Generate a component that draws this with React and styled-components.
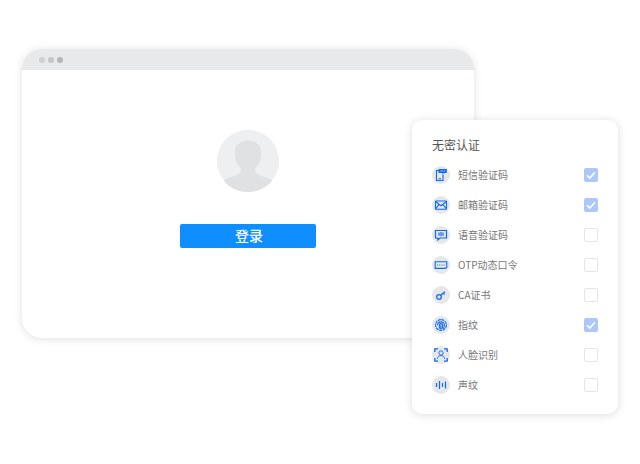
import React from 'react';
import styled, { createGlobalStyle } from 'styled-components';

const GlobalStyle = createGlobalStyle`
  html, body {
    margin: 0;
    background: #fff;
    font-family: "Noto Sans CJK SC", "Noto Sans", sans-serif;
  }
`;

const Stage = styled.div`
  position: relative;
  width: 640px;
  height: 464px;
  padding: 49px 0 0 22px;
  box-sizing: border-box;
  overflow: hidden;
`;

const BrowserWindow = styled.div`
  width: 452px;
  height: 289px;
  border-radius: 20px;
  background: #fff;
  box-shadow: 0 1px 8px rgba(0, 0, 0, 0.13);
  overflow: hidden;
  display: flex;
  flex-direction: column;
`;

const TitleBar = styled.div`
  height: 21px;
  flex: none;
  background: #e8e9ea;
  display: flex;
  align-items: center;
  gap: 3px;
  padding: 0 0 0 17px;
`;

const Dot = styled.span`
  width: 6px;
  height: 6px;
  border-radius: 50%;
  background: ${p => p.$color};
`;

const LoginArea = styled.div`
  display: flex;
  flex-direction: column;
  align-items: center;
  padding-top: 60px;
`;

const Avatar = styled.svg`
  display: block;
  width: 62px;
  height: 62px;
`;

const LoginButton = styled.div`
  margin-top: 32px;
  width: 136px;
  height: 24px;
  box-sizing: border-box;
  padding-left: 2px;
  border-radius: 2px;
  background: #0f8fff;
  color: #fff;
  font-size: 14px;
  font-weight: 500;
  line-height: 22px;
  text-align: center;
`;

const Panel = styled.div`
  position: absolute;
  left: 412px;
  top: 120px;
  width: 206px;
  height: 294px;
  box-sizing: border-box;
  padding: 16px 20px 0;
  border-radius: 10px;
  background: #fff;
  box-shadow: 0 1px 8px rgba(0, 0, 0, 0.14);
`;

const PanelTitle = styled.div`
  font-size: 12px;
  line-height: 18px;
  color: #555;
  margin-bottom: 6px;
`;

const Row = styled.div`
  height: 30px;
  display: flex;
  align-items: center;
`;

const IconCircle = styled.span`
  width: 18px;
  height: 18px;
  flex: none;
  border-radius: 50%;
  background: #e6e7e8;
  display: flex;
  align-items: center;
  justify-content: center;
`;

const Label = styled.span`
  margin-left: 8px;
  padding-bottom: 2px;
  flex: 1;
  font-size: 10px;
  color: #777;
  white-space: nowrap;
`;

const Check = styled.span`
  width: 14px;
  height: 14px;
  box-sizing: border-box;
  border-radius: 2px;
  display: flex;
  align-items: center;
  justify-content: center;
  background: ${p => (p.$on ? '#adc8f8' : '#fff')};
  border: ${p => (p.$on ? 'none' : '1px solid #e4e5e6')};
`;

const Glyph = ({ children }) => (
  <svg width="14" height="14" viewBox="0 0 14 14" fill="none" stroke="#1268ee" strokeWidth="1.1">
    {children}
  </svg>
);

const methods = [
  {
    name: '短信验证码',
    icon: (
      <>
        <path d="M5 2.5H2.5V12.5H9V6.5" />
        <path d="M4.5 1H12.8V5H10L8.5 6.5V5H4.5Z" fill="#1268ee" stroke="none" />
        <path d="M6.5 3H7.5M8.2 3H9.2M9.9 3H10.9" stroke="#fff" strokeWidth="0.8" />
        <path d="M4.5 10.8H7" />
      </>
    ),
    checked: true,
  },
  {
    name: '邮箱验证码',
    icon: (
      <>
        <rect x="1.5" y="3" width="11" height="8.2" rx="0.5" />
        <path d="M1.5 3.5L7 7.8L12.5 3.5M1.5 10.8L5 6.6M12.5 10.8L9 6.6" />
      </>
    ),
    checked: true,
  },
  {
    name: '语音验证码',
    icon: (
      <>
        <path d="M1.5 2.5H12.5V10H6L3.8 12V10H1.5Z" strokeWidth="1.2" />
        <path d="M5 4.5V7.8M7 4V8.2M9 4.5V7.8" strokeWidth="1.2" />
      </>
    ),
  },
  {
    name: 'OTP动态口令',
    icon: (
      <>
        <path d="M1.2 3.7H12.8V9.2L11.5 10.4H1.2Z" />
        <path d="M3 7H4M5.2 7H6.2M7.4 7H8.4M9.6 7H10.6" />
      </>
    ),
  },
  {
    name: 'CA证书',
    icon: (
      <>
        <circle cx="5" cy="9" r="2.3" strokeWidth="1.3" />
        <path d="M6.7 7.3L11 3.8M9.2 5.2L10.6 6.7" strokeWidth="1.2" />
      </>
    ),
  },
  {
    name: '指纹',
    icon: (
      <>
        <circle cx="7" cy="7" r="5.4" strokeDasharray="3 0.6" />
        <path d="M3.6 7.2C3.6 2.7 10.4 2.7 10.4 7.2C10.4 8.6 9.8 9.9 9 11" />
        <path d="M5.2 10.6C5.8 9 5.1 7.9 5.5 6.6C6 5.1 8.4 5.3 8.7 7C8.8 8.3 8.4 9.7 7.6 11.2" />
        <path d="M7 6.6C7.2 8.2 6.8 9.8 6.2 11.4" />
      </>
    ),
    checked: true,
  },
  {
    name: '人脸识别',
    icon: (
      <>
        <path d="M0.8 4V0.8H4M10 0.8H13.2V4M0.8 10V13.2H4M10 13.2H13.2V10" strokeWidth="1.3" />
        <circle cx="7" cy="5" r="2.2" strokeWidth="0.9" />
        <path d="M3.4 10.8C3.6 8.6 5 7.6 7 7.6C9 7.6 10.4 8.6 10.6 10.8" strokeWidth="0.9" />
      </>
    ),
  },
  {
    name: '声纹',
    icon: <path d="M2.5 5V9M5.5 3V11M8.5 5V9M11.5 3.5V10.5" strokeWidth="1.2" />,
  },
];

const App = () => (
  <Stage>
    <GlobalStyle />
    <BrowserWindow>
      <TitleBar>
        <Dot $color="#cfd0d2" />
        <Dot $color="#c6c7c9" />
        <Dot $color="#b4b5b7" />
      </TitleBar>
      <LoginArea>
        <Avatar viewBox="0 0 62 62">
          <circle cx="31" cy="31" r="31" fill="#eeeff1" />
          <path
            fill="#e0e1e3"
            d="M31 10.5C22.5 10.5 17.8 15.5 17.8 22.5C17.8 29 19.5 33.5 22.5 36.5C24.2 38.5 24.2 41.5 22.5 43.5C20 45.8 12 47 6.5 50.5C12 57.5 21 62 31 62C41 62 50 57.5 55.5 50.5C50 47 42 45.8 39.5 43.5C37.8 41.5 37.8 38.5 39.5 36.5C42.5 33.5 44.2 29 44.2 22.5C44.2 15.5 39.5 10.5 31 10.5Z"
          />
        </Avatar>
        <LoginButton>登录</LoginButton>
      </LoginArea>
    </BrowserWindow>
    <Panel>
      <PanelTitle>无密认证</PanelTitle>
      {methods.map(m => (
        <Row key={m.name}>
          <IconCircle>
            <Glyph>{m.icon}</Glyph>
          </IconCircle>
          <Label>{m.name}</Label>
          <Check $on={m.checked}>
            {m.checked && (
              <svg width="10" height="10" viewBox="0 0 10 10" fill="none" stroke="#fff" strokeWidth="1.6">
                <path d="M1 5.2L3.8 8L9 2.2" />
              </svg>
            )}
          </Check>
        </Row>
      ))}
    </Panel>
  </Stage>
);

export default App;
